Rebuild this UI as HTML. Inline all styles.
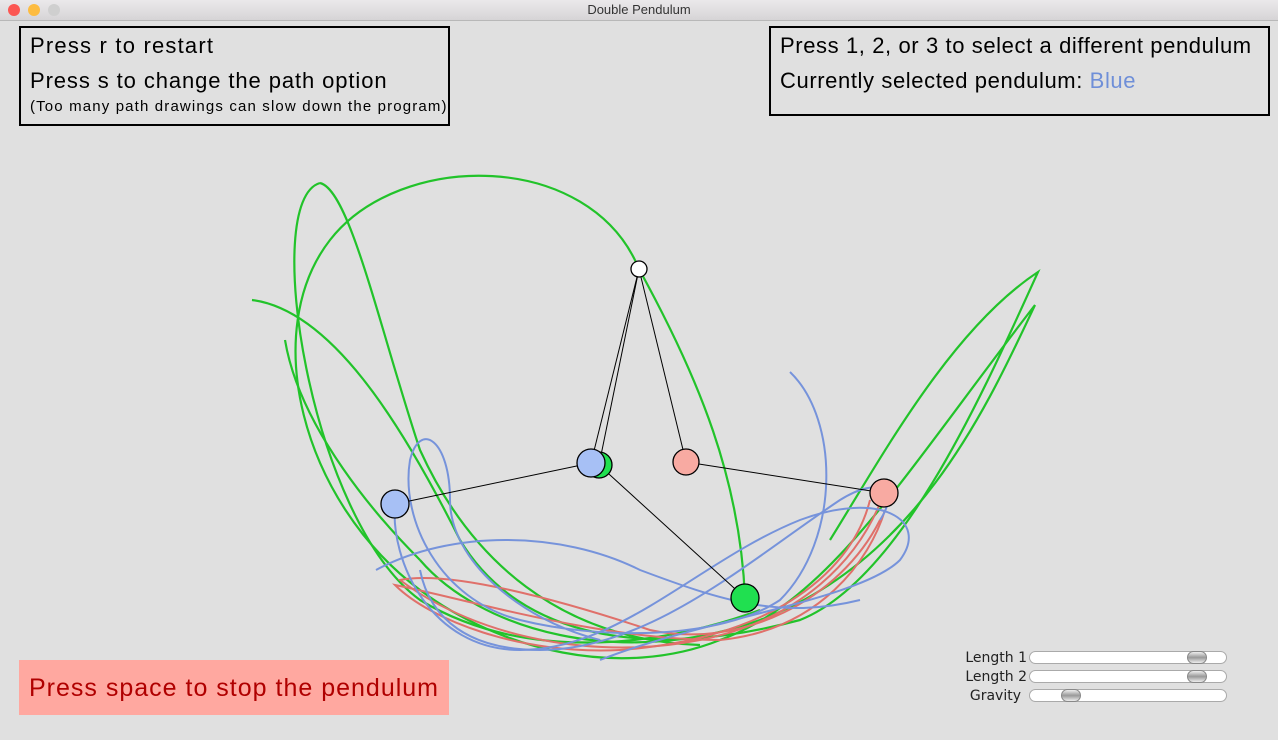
<!DOCTYPE html>
<html><head><style>
body{margin:0;width:1278px;height:740px;background:#e0e0e0;overflow:hidden;font-family:"Liberation Sans",sans-serif;position:relative}
.tb{position:absolute;left:0;top:0;width:1278px;height:20px;background:linear-gradient(#ebe9eb,#d6d4d6);border-bottom:1px solid #b8b8b8;text-align:center;font-size:13px;line-height:20px;color:#333}
.dot{position:absolute;top:4px;width:12px;height:12px;border-radius:50%}
.box{position:absolute;border:2px solid #000;font-size:22px;color:#000;box-sizing:border-box}
.box div{position:absolute;left:9px;white-space:nowrap;letter-spacing:0.6px}
.lbl{position:absolute;font-family:"DejaVu Sans",sans-serif;font-size:14px;color:#222;text-align:right;width:80px}
.sl{position:absolute;left:1029px;width:198px;height:13px;border:1px solid #aaa;border-radius:7px;background:#fff;box-sizing:border-box}
.kn{position:absolute;top:-1px;width:20px;height:13px;border-radius:7px;border:1px solid #888;background:linear-gradient(#eee,#999,#eee);box-sizing:border-box}
</style></head><body>
<div class="tb">Double Pendulum</div>
<div class="dot" style="left:8px;background:#fc5753"></div>
<div class="dot" style="left:28px;background:#fdbc40"></div>
<div class="dot" style="left:48px;background:#cfcfcf"></div>
<div class="box" style="left:19px;top:26px;width:431px;height:100px">
<div style="top:5px;letter-spacing:1.2px">Press r to restart</div>
<div style="top:40px;letter-spacing:0.9px">Press s to change the path option</div>
<div style="top:70px;font-size:15px;letter-spacing:1.15px">(Too many path drawings can slow down the program)</div></div>
<div class="box" style="left:769px;top:26px;width:501px;height:90px">
<div style="top:5px">Press 1, 2, or 3 to select a different pendulum</div>
<div style="top:40px">Currently selected pendulum: <span style="color:#6f8fd8">Blue</span></div></div>
<svg width="1278" height="740" style="position:absolute;left:0;top:0" fill="none">
<g stroke="#22c32a" stroke-width="2.2">
<path d="M639 269 C700 380,740 480,745 598"/>
<path d="M639 269 C590 150,400 150,330 240 C260 330,300 500,420 590 C500 650,620 680,720 640 C830 600,900 480,1035 305 C990 400,920 560,760 620 C620 670,480 630,420 560"/>
<path d="M252 300 C330 310,400 420,460 540 C520 640,650 660,800 620 C900 580,980 400,1038 272 C950 330,880 460,830 540"/>
<path d="M320 183 C260 200,310 520,420 600 C520 660,650 650,760 610"/>
<path d="M320 183 C350 190,380 330,420 450 C470 560,560 640,700 645"/>
<path d="M420 560 C380 520,300 430,285 340"/>
</g>
<g stroke="#e0706a" stroke-width="2">
<path d="M884 493 C860 560,800 620,700 640 C600 660,480 640,400 580 C450 570,560 600,650 630 C740 650,840 600,880 520"/>
<path d="M870 500 C850 580,760 640,620 650 C520 655,430 620,395 585 C470 600,600 640,720 640 C820 630,870 560,885 510"/>
</g>
<g stroke="#7693db" stroke-width="2">
<path d="M395 504 C390 560,430 650,520 650 C620 650,700 560,800 520 C880 490,930 520,900 560 C860 600,700 620,600 660"/>
<path d="M790 372 C840 420,840 540,780 600 C720 640,600 640,520 620 C440 600,400 520,410 460 C420 420,450 440,450 500 C450 560,520 620,600 640"/>
<path d="M376 570 C450 530,560 530,640 570 C720 600,780 620,860 600"/>
<path d="M420 570 C430 620,470 650,540 650 C650 650,750 560,840 500 C880 475,900 490,880 520"/>
</g>
<g stroke="#000" stroke-width="1">
<line x1="639" y1="269" x2="591" y2="463"/><line x1="591" y1="463" x2="395" y2="504"/>
<line x1="639" y1="269" x2="599" y2="465"/><line x1="599" y1="465" x2="745" y2="598"/>
<line x1="639" y1="269" x2="686" y2="462"/><line x1="686" y1="462" x2="884" y2="493"/>
</g>
<g stroke="#000" stroke-width="1.3">
<circle cx="639" cy="269" r="8" fill="#fff"/>
<circle cx="599" cy="465" r="13" fill="#20e050"/>
<circle cx="591" cy="463" r="14" fill="#a7c0f5"/>
<circle cx="395" cy="504" r="14" fill="#a7c0f5"/>
<circle cx="745" cy="598" r="14" fill="#20e050"/>
<circle cx="686" cy="462" r="13" fill="#f8aaa2"/>
<circle cx="884" cy="493" r="14" fill="#f8aaa2"/>
</g></svg>
<div style="position:absolute;left:19px;top:660px;width:430px;height:55px;background:#ffa8a0;color:#b00000;font-size:25px;line-height:57px;box-sizing:border-box;padding-left:10px;letter-spacing:1px;white-space:nowrap">Press space to stop the pendulum</div>
<div class="lbl" style="left:947px;top:650px">Length 1</div>
<div class="lbl" style="left:947px;top:669px">Length 2</div>
<div class="lbl" style="left:941px;top:688px">Gravity</div>
<div class="sl" style="top:651px"><div class="kn" style="left:157px"></div></div>
<div class="sl" style="top:670px"><div class="kn" style="left:157px"></div></div>
<div class="sl" style="top:689px"><div class="kn" style="left:31px"></div></div>
</body></html>
